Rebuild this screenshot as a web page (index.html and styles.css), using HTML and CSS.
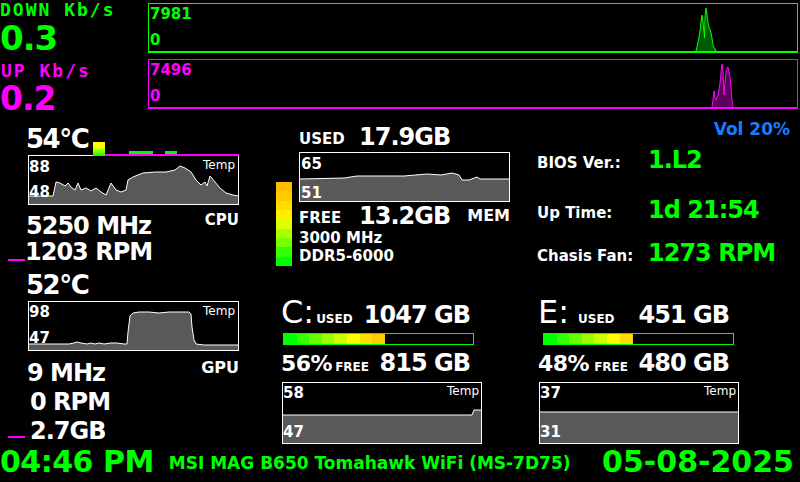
FILE: index.html
```html
<!DOCTYPE html>
<html lang="en">
<head>
<meta charset="utf-8">
<title>System Monitor</title>
<link rel="stylesheet" href="styles.css">
</head>
<body>
<div class="screen">
  <section class="net">
    <div class="net-row down">
      <div class="net-text">
        <div class="net-label">DOWN Kb/s</div>
        <div class="net-value">0.3</div>
      </div>
      <div class="net-graph">
        <span class="g-label g-top">7981</span>
        <span class="g-label g-bottom">0</span>
        <svg viewBox="0 0 648 47" preserveAspectRatio="none">
          <polygon class="net-fill" points="547,47 548,43 549,38 550,33 551,27 552,18 553,11 554,18 555,28 555.5,34 556,13 557,4 558,11 559,19 560,24 561,25 562,29 563,34 564,41 566,45 567,47"/>
          <polyline class="net-line" points="547,47 548,43 549,38 550,33 551,27 552,18 553,11 554,18 555,28 555.5,34 556,13 557,4 558,11 559,19 560,24 561,25 562,29 563,34 564,41 566,45 567,47"/>
        </svg>
      </div>
    </div>
    <div class="net-row up">
      <div class="net-text">
        <div class="net-label">UP Kb/s</div>
        <div class="net-value">0.2</div>
      </div>
      <div class="net-graph">
        <span class="g-label g-top">7496</span>
        <span class="g-label g-bottom">0</span>
        <svg viewBox="0 0 648 47" preserveAspectRatio="none">
          <polygon class="net-fill" points="563,47 564,40 565,31 566,38 567,40 569,35 571,23 572,12 573,4 574,12 575,35 577,12 578,8 579,7 580,12 581,17 582,27 583,40 584,47"/>
          <polyline class="net-line" points="563,47 564,40 565,31 566,38 567,40 569,35 571,23 572,12 573,4 574,12 575,35 577,12 578,8 579,7 580,12 581,17 582,27 583,40 584,47"/>
        </svg>
      </div>
    </div>
  </section>

  <main class="dash">
    <section class="col-left">
      <div class="cpu-head">
        <div class="temp">54°C</div>
        <svg class="cpu-bars" width="146" height="14" viewBox="0 0 146 14">
          <defs>
            <linearGradient id="yg" x1="0" y1="0" x2="0" y2="1">
              <stop offset="0" stop-color="#ffff00"/>
              <stop offset="0.35" stop-color="#ffff00"/>
              <stop offset="1" stop-color="#00ff00"/>
            </linearGradient>
          </defs>
          <rect x="0" y="0" width="12" height="14" fill="url(#yg)"/>
          <rect x="12" y="12" width="134" height="2" fill="#ff00ff"/>
          <rect x="36" y="9" width="24" height="3" fill="#00ff00"/>
          <rect x="72" y="9" width="12" height="3" fill="#00ff00"/>
        </svg>
      </div>
      <div class="graph chart-cpu">
        <span class="g-label g-top">88</span>
        <span class="g-label g-low">48</span>
        <span class="g-temp">Temp</span>
        <svg viewBox="0 0 209 48" preserveAspectRatio="none">
          <polygon class="fill" points="0,40 24,40 27,26 31,27 36,30 39,27 42,31 46,34 49,27 52,34 57,32 62,35 67,32 72,36 77,39 82,27 87,34 92,36 97,34 99,24 104,21 114,17 127,16 137,16 146,14 151,10 156,12 162,16 167,24 172,29 176,26 178,30 181,20 186,26 191,32 197,37 204,39 209,40 209,48 0,48"/>
          <polyline class="line" points="0,40 24,40 27,26 31,27 36,30 39,27 42,31 46,34 49,27 52,34 57,32 62,35 67,32 72,36 77,39 82,27 87,34 92,36 97,34 99,24 104,21 114,17 127,16 137,16 146,14 151,10 156,12 162,16 167,24 172,29 176,26 178,30 181,20 186,26 191,32 197,37 204,39 209,40"/>
        </svg>
      </div>
      <div class="freq-row">
        <div class="big val-freq">5250 MHz</div>
        <div class="unit">CPU</div>
      </div>
      <div class="dash-row rpm-row">
        <span class="dash-mark"></span>
        <span class="big">1203 RPM</span>
      </div>
      <div class="temp temp-gpu">52°C</div>
      <div class="graph chart-gpu">
        <span class="g-label g-top">98</span>
        <span class="g-label g-low">47</span>
        <span class="g-temp">Temp</span>
        <svg viewBox="0 0 209 48" preserveAspectRatio="none">
          <polygon class="fill" points="0,42 40,42 45,41 48,40 52,41 58,42 62,41 66,42 70,41 75,42 82,41 88,41 95,42 98,42 99,30 101,14 104,11 110,10 120,10 130,11 140,10 150,10 160,10 162,12 163,25 165,38 167,42 175,43 185,43 209,43 209,48 0,48"/>
          <polyline class="line" points="0,42 40,42 45,41 48,40 52,41 58,42 62,41 66,42 70,41 75,42 82,41 88,41 95,42 98,42 99,30 101,14 104,11 110,10 120,10 130,11 140,10 150,10 160,10 162,12 163,25 165,38 167,42 175,43 185,43 209,43"/>
        </svg>
      </div>
      <div class="freq-row gpu-row">
        <div class="big val-gfreq">9 MHz</div>
        <div class="unit unit-gpu">GPU</div>
      </div>
      <div class="big val-grpm">0 RPM</div>
      <div class="dash-row vram-row">
        <span class="dash-mark"></span>
        <span class="big">2.7GB</span>
      </div>
    </section>

    <section class="col-mem">
      <div class="mem-scale"></div>
      <div class="mem-body">
        <div class="mem-row mem-used">
          <span class="mem-key">USED</span>
          <span class="big">17.9GB</span>
        </div>
        <div class="graph chart-mem">
          <span class="g-label g-top">65</span>
          <span class="g-label g-low">51</span>
          <svg viewBox="0 0 209 48" preserveAspectRatio="none">
            <polygon class="fill" points="0,26 44,25 57,23 77,23 104,23 127,21 141,22 152,20 159,22 162,27 169,27 177,24 180,26 209,26 209,48 0,48"/>
            <polyline class="line" points="0,26 44,25 57,23 77,23 104,23 127,21 141,22 152,20 159,22 162,27 169,27 177,24 180,26 209,26"/>
          </svg>
        </div>
        <div class="mem-row mem-free">
          <span class="mem-key">FREE</span>
          <span class="big">13.2GB</span>
          <span class="unit unit-mem">MEM</span>
        </div>
        <div class="mem-info">3000 MHz</div>
        <div class="mem-info">DDR5-6000</div>
      </div>
    </section>

    <section class="col-info">
      <div class="vol">Vol 20%</div>
      <div class="info-row row-bios">
        <span class="info-key">BIOS Ver.:</span>
        <span class="big info-val">1.L2</span>
      </div>
      <div class="info-row row-up">
        <span class="info-key">Up Time:</span>
        <span class="big info-val">1d 21:54</span>
      </div>
      <div class="info-row row-fan">
        <span class="info-key">Chasis Fan:</span>
        <span class="big info-val">1273 RPM</span>
      </div>
    </section>

    <section class="disk disk-c">
      <div class="disk-head">
        <span class="drive">C:</span>
        <span class="disk-key key-used">USED</span>
        <span class="big disk-val">1047 GB</span>
      </div>
      <div class="disk-bar"><div class="disk-fill" style="width:101px"></div></div>
      <div class="disk-free">
        <span class="pct">56%</span>
        <span class="disk-key key-free">FREE</span>
        <span class="big disk-val">815 GB</span>
      </div>
      <div class="graph chart-disk">
        <span class="g-label d-top">58</span>
        <span class="g-label d-low">47</span>
        <span class="g-temp d-temp">Temp</span>
        <svg viewBox="0 0 198 60" preserveAspectRatio="none">
          <polygon class="fill" points="0,32 189,32 191,27 198,27 198,60 0,60"/>
          <polyline class="line" points="0,32 189,32 191,27 198,27"/>
        </svg>
      </div>
    </section>

    <section class="disk disk-e">
      <div class="disk-head">
        <span class="drive">E:</span>
        <span class="disk-key key-used">USED</span>
        <span class="big disk-val">451 GB</span>
      </div>
      <div class="disk-bar"><div class="disk-fill" style="width:89px"></div></div>
      <div class="disk-free">
        <span class="pct">48%</span>
        <span class="disk-key key-free">FREE</span>
        <span class="big disk-val">480 GB</span>
      </div>
      <div class="graph chart-disk">
        <span class="g-label d-top">37</span>
        <span class="g-label d-low">31</span>
        <span class="g-temp d-temp">Temp</span>
        <svg viewBox="0 0 198 60" preserveAspectRatio="none">
          <polygon class="fill" points="0,29 198,29 198,60 0,60"/>
          <polyline class="line" points="0,29 198,29"/>
        </svg>
      </div>
    </section>
  </main>

  <footer class="foot">
    <div class="clock">04:46 PM</div>
    <div class="board">MSI MAG B650 Tomahawk WiFi (MS-7D75)</div>
    <div class="date">05-08-2025</div>
  </footer>
</div>
</body>
</html>
```

FILE: styles.css
```css
* {
  box-sizing: border-box;
  margin: 0;
  padding: 0;
}

html,
body {
  background: #000;
}

body {
  width: 800px;
  height: 482px;
  overflow: hidden;
  font-family: "DejaVu Sans", Verdana, sans-serif;
  font-weight: bold;
  color: #fff;
}

.screen {
  width: 800px;
  height: 482px;
  display: flex;
  flex-direction: column;
}

/* ---------- network ---------- */
.net {
  height: 115px;
  display: flex;
  flex-direction: column;
}

.net-row {
  display: flex;
}

.net-row.down {
  height: 56px;
  color: #00ff00;
}

.net-row.up {
  height: 59px;
  color: #ff00ff;
}

.net-text {
  width: 148px;
}

.net-label {
  font-family: "DejaVu Sans Mono", monospace;
  font-size: 18px;
  line-height: 18px;
  letter-spacing: 2px;
  white-space: nowrap;
}

.down .net-label {
  margin-top: 1px;
}

.up .net-label {
  margin-top: 6px;
  margin-left: 1px;
}

.net-value {
  font-size: 34px;
  line-height: 34px;
  margin-top: 2px;
  letter-spacing: -1px;
}

.up .net-value {
  font-size: 33px;
  line-height: 33px;
}

.net-graph {
  position: relative;
  width: 650px;
  height: 50px;
  margin-top: 3px;
  border: 1px solid currentColor;
  border-bottom-width: 2px;
}

.net-graph svg {
  display: block;
  width: 648px;
  height: 47px;
}

.down .net-fill {
  fill: #005a00;
}

.up .net-fill {
  fill: #5a005a;
}

.net-line {
  fill: none;
  stroke: currentColor;
  stroke-width: 1;
}

.g-label {
  position: absolute;
  left: 1px;
  font-size: 15px;
  line-height: 15px;
}

.net-graph .g-top {
  top: 3px;
}

.net-graph .g-bottom {
  top: 29px;
}

/* ---------- main grid ---------- */
.dash {
  height: 330px;
  display: grid;
  grid-template-columns: 270px 260px 270px;
  grid-template-rows: 170px 160px;
}

.big {
  font-size: 24px;
  line-height: 24px;
  letter-spacing: -1px;
  white-space: nowrap;
}

.unit {
  font-size: 15px;
  line-height: 15px;
}

/* graphs */
.graph {
  position: relative;
  border: 1px solid #fff;
}

.graph svg {
  display: block;
  width: 100%;
  height: 100%;
}

.graph .fill {
  fill: #595959;
}

.graph .line {
  fill: none;
  stroke: #fff;
  stroke-width: 1;
}

.graph .g-label {
  left: 0;
  color: #fff;
}

.g-temp {
  position: absolute;
  top: 3px;
  right: 3px;
  font-size: 12px;
  line-height: 12px;
  font-weight: normal;
}

/* left column */
.col-left {
  grid-row: 1 / 3;
  grid-column: 1;
  padding: 0 31px 0 28px;
  display: flex;
  flex-direction: column;
}

.cpu-head {
  margin-top: 11px;
  height: 30px;
  display: flex;
  align-items: flex-start;
}

.temp {
  font-size: 26px;
  line-height: 26px;
  letter-spacing: -1.5px;
  margin-left: -2px;
  white-space: nowrap;
}

.cpu-bars {
  display: block;
  margin-left: auto;
  align-self: flex-end;
  position: relative;
  z-index: 1;
}

.chart-cpu,
.chart-gpu {
  height: 50px;
}

.chart-cpu {
  margin-top: -1px;
}

.chart-cpu .g-top,
.chart-gpu .g-top {
  top: 4px;
}

.chart-cpu .g-low {
  top: 29px;
}

.chart-gpu .g-top {
  top: 3px;
}

.chart-gpu .g-low {
  top: 29px;
}

.freq-row {
  display: flex;
  align-items: flex-start;
  justify-content: space-between;
}

.val-freq {
  margin-top: 9px;
  margin-left: -2px;
}

.freq-row .unit {
  margin-top: 8px;
}

.dash-row {
  display: flex;
  align-items: flex-start;
  margin-left: -20px;
}

.dash-mark {
  display: block;
  width: 17px;
  height: 2px;
  background: #ff00ff;
}

.rpm-row {
  margin-top: 2px;
}

.rpm-row .dash-mark {
  margin-top: 19px;
}

.temp-gpu {
  margin-top: 8px;
}

.chart-gpu {
  margin-top: 3px;
}

.val-gfreq {
  margin-top: 10px;
  margin-left: -1px;
}

.gpu-row .unit-gpu {
  margin-top: 9px;
  font-size: 16px;
  line-height: 16px;
}

.val-grpm {
  margin-top: 5px;
  margin-left: 2px;
}

.vram-row {
  margin-top: 5px;
}

.vram-row .dash-mark {
  margin-top: 17px;
  margin-right: 5px;
}

/* memory column */
.col-mem {
  grid-row: 1;
  grid-column: 2;
  display: flex;
  align-items: flex-start;
}

.mem-scale {
  width: 16px;
  height: 84px;
  margin-top: 67px;
  margin-left: 6px;
  background: linear-gradient(to bottom,
    #ffbb00 0 11.11%,
    #ffc800 11.11% 22.22%,
    #ffdd00 22.22% 33.33%,
    #fff000 33.33% 44.44%,
    #ddff00 44.44% 55.55%,
    #aaff00 55.55% 66.66%,
    #77ff00 66.66% 77.77%,
    #33ff00 77.77% 88.88%,
    #00ff00 88.88% 100%);
}

.mem-body {
  width: 211px;
  margin-left: 7px;
  display: flex;
  flex-direction: column;
}

.mem-row {
  display: flex;
  align-items: flex-start;
}

.mem-key {
  width: 60px;
  font-size: 15px;
  line-height: 15px;
}

.mem-used {
  margin-top: 10px;
}

.mem-used .mem-key {
  margin-top: 7px;
}

.chart-mem {
  margin-top: 3px;
  height: 50px;
}

.chart-mem .g-top {
  top: 4px;
  left: 1px;
}

.chart-mem .g-low {
  top: 33px;
  left: 1px;
}

.mem-free .mem-key {
  margin-top: 9px;
}

.mem-free .big {
  margin-top: 2px;
}

.unit-mem {
  margin-left: auto;
  margin-top: 6px;
  font-size: 16px;
  line-height: 16px;
}

.mem-info {
  margin-top: 3px;
  font-size: 15px;
  line-height: 15px;
  white-space: nowrap;
}

/* info column */
.col-info {
  grid-row: 1;
  grid-column: 3;
  display: flex;
  flex-direction: column;
}

.vol {
  margin-top: 6px;
  padding-right: 10px;
  text-align: right;
  font-size: 17px;
  line-height: 17px;
  color: #1a7cff;
}

.info-row {
  display: flex;
  align-items: baseline;
  padding-left: 7px;
}

.info-key {
  width: 111px;
  font-size: 15px;
  line-height: 15px;
  white-space: nowrap;
}

.info-val {
  color: #00ff00;
}

.row-bios {
  margin-top: 10px;
}

.row-up {
  margin-top: 26px;
}

.row-fan {
  margin-top: 19px;
}

/* disks */
.disk {
  grid-row: 2;
  width: 202px;
  display: flex;
  flex-direction: column;
}

.disk-c {
  grid-column: 2;
  margin-left: 11px;
}

.disk-e {
  grid-column: 3;
  margin-left: 8px;
}

.disk-head,
.disk-free {
  display: flex;
  align-items: baseline;
}

.disk-head {
  margin-top: 11px;
}

.drive {
  font-size: 32px;
  line-height: 32px;
  font-weight: normal;
}

.disk-key {
  font-size: 12px;
  line-height: 12px;
}

.disk-c .key-used {
  margin-left: 2px;
}

.disk-e .key-used {
  margin-left: 9px;
}

.disk-val {
  margin-left: auto;
}

.disk-c .disk-val {
  margin-right: 13px;
}

.disk-e .disk-val {
  margin-right: 11px;
}

.disk-bar {
  margin-top: 5px;
  width: 191px;
  height: 12px;
  border: 1px solid #00ff00;
}

.disk-c .disk-bar {
  margin-left: 2px;
}

.disk-e .disk-bar {
  margin-left: 5px;
}

.disk-fill {
  height: 10px;
  background: linear-gradient(to right,
    #00ff00 0 12.6px,
    #33ff00 12.6px 25.2px,
    #66ff00 25.2px 37.8px,
    #99ff00 37.8px 50.4px,
    #ccff00 50.4px 63px,
    #ffff00 63px 75.6px,
    #ffdd00 75.6px 88.2px,
    #ffcc00 88.2px 100.8px,
    #ffaa00 100.8px 189px);
}

.disk-free {
  margin-top: 6px;
}

.pct {
  font-size: 22px;
  line-height: 22px;
  letter-spacing: -0.5px;
}

.disk-c .key-free {
  margin-left: 3px;
}

.disk-e .key-free {
  margin-left: 5px;
}

.chart-disk {
  margin-top: 7px;
  margin-left: 1px;
  width: 200px;
  height: 62px;
}

.d-top {
  top: 3px;
}

.d-low {
  top: 42px;
}

.d-temp {
  top: 2px;
  right: 2px;
}

/* footer */
.foot {
  height: 37px;
  display: flex;
  align-items: flex-start;
  color: #00ff00;
}

.clock {
  margin-top: 2px;
  font-size: 30px;
  line-height: 30px;
  letter-spacing: -0.5px;
  white-space: nowrap;
}

.board {
  margin-top: 10px;
  margin-left: 15px;
  font-size: 17px;
  line-height: 17px;
  white-space: nowrap;
}

.date {
  margin-top: 2px;
  margin-left: auto;
  padding-right: 6px;
  font-size: 30px;
  line-height: 30px;
  white-space: nowrap;
}
```
